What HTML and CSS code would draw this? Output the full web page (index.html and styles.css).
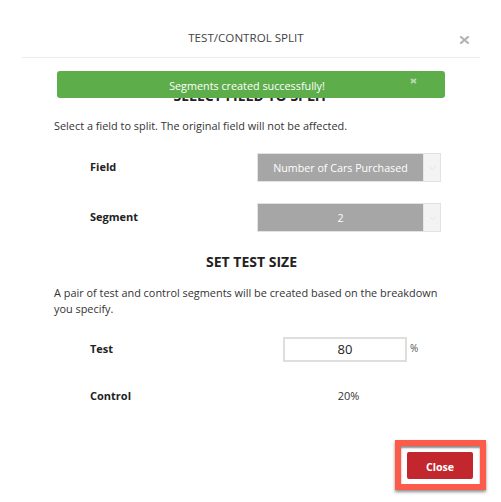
FILE: index.html
```html
<!DOCTYPE html>
<html>
<head>
<meta charset="utf-8">
<link rel="stylesheet" href="styles.css">
</head>
<body>
<div class="modal">
  <div class="header">
    <div class="title">TEST/CONTROL SPLIT</div>
    <svg class="x-icon" width="9" height="8" viewBox="0 0 9 8"><path d="M1 1 L8 7 M8 1 L1 7" stroke="#b3b3b3" stroke-width="2.2" stroke-linecap="square"/></svg>
  </div>

  <div class="alert">
    <span>Segments created successfully!</span>
    <svg class="alert-x" width="7" height="6" viewBox="0 0 7 6"><path d="M1 1 L6 5 M6 1 L1 5" stroke="#b5dbaa" stroke-width="1.8"/></svg>
  </div>

  <div class="body">
    <h2 class="heading first">SELECT FIELD TO SPLIT</h2>
    <p class="desc">Select a field to split. The original field will not be affected.</p>

    <div class="row row-field">
      <div class="label">Field</div>
      <div class="select">
        <div class="select-val">Number of Cars Purchased</div>
        <div class="select-arrow"><svg width="7" height="4" viewBox="0 0 7 4"><path d="M0.5 0.5 L3.5 3.5 L6.5 0.5" fill="none" stroke="#e4e4e4" stroke-width="1"/></svg></div>
      </div>
    </div>

    <div class="row row-seg">
      <div class="label">Segment</div>
      <div class="select">
        <div class="select-val">2</div>
        <div class="select-arrow"><svg width="7" height="4" viewBox="0 0 7 4"><path d="M0.5 0.5 L3.5 3.5 L6.5 0.5" fill="none" stroke="#e4e4e4" stroke-width="1"/></svg></div>
      </div>
    </div>

    <h2 class="heading second">SET TEST SIZE</h2>
    <p class="desc desc2">A pair of test and control segments will be created based on the breakdown you specify.</p>

    <div class="row row-test">
      <div class="label">Test</div>
      <div class="input">80</div>
      <div class="pct">%</div>
    </div>

    <div class="row row-control">
      <div class="label">Control</div>
      <div class="value">20%</div>
    </div>
  </div>

  <div class="footer">
    <div class="highlight">
      <button class="close-btn">Close</button>
    </div>
  </div>
</div>
</body>
</html>
```

FILE: styles.css
```css
* { box-sizing: border-box; }
html, body { margin: 0; padding: 0; background: #fff; }
body { font-family: "Open Sans", "Liberation Sans", sans-serif; color: #333; }

.modal { width: 501px; height: 502px; position: relative; }

.header {
  margin: 0 21px 0 22px;
  height: 58px;
  padding-top: 29px;
  border-bottom: 1px solid #ececec;
  position: relative;
  text-align: center;
}
.title { font-size: 11.6px; line-height: 18px; color: #444; padding-right: 10px; }
.x-icon { position: absolute; right: 11px; top: 36px; }

.alert {
  position: absolute;
  left: 57px; top: 71px;
  width: 388px; height: 27px;
  background: #5dae4b;
  border-radius: 3px;
  color: #fff;
  font-size: 10.8px;
  line-height: 27px;
  text-align: center;
  z-index: 2;
}
.alert span { position: relative; left: -4px; top: 1px; }
.alert-x { position: absolute; left: 353px; top: 7px; }

.body { padding: 0 0 0 54px; }

.heading {
  margin: 0; font-size: 14px; font-weight: 700; line-height: 20px;
  text-align: center; color: #222; padding-right: 54px;
}
.heading.first { margin-top: 28px; }
.heading.second { margin-top: 20px; padding-left: 2px; }

.desc { margin: 12px 0 0; font-size: 10.9px; line-height: 16px; color: #333; width: 390px; }
.desc2 { margin-top: 13px; }

.row { display: flex; align-items: center; }
.label { width: 203px; padding-left: 36px; padding-bottom: 3px; font-size: 11px; font-weight: 700; color: #222; }
.row-field { margin-top: 19px; height: 29px; }
.row-seg { margin-top: 21px; height: 29px; }
.row-test { margin-top: 20px; height: 25px; }
.row-control { margin-top: 22px; height: 25px; }
.row-test .label, .row-control .label { width: 229px; }

.select {
  width: 184px; height: 29px;
  display: flex;
  border: 1px solid #e2e2e2;
  background: #a6a6a6;
}
.select-val { flex: 1; color: #fff; font-size: 10.7px; line-height: 28px; text-align: center; }
.select-arrow {
  width: 17px; background: #f3f3f3; border-left: 1px solid #e6e6e6;
  display: flex; align-items: center; justify-content: center;
}

.input {
  width: 124px; height: 25px;
  border: 2px solid #dedede;
  font-size: 13px; line-height: 21px; text-align: center; color: #222;
}
.pct { margin-left: 3px; padding-bottom: 3px; font-size: 10px; color: #555; }
.value { width: 124px; text-align: center; padding-left: 7px; padding-bottom: 2px; font-size: 11px; color: #333; }

.footer { display: flex; justify-content: flex-end; padding-right: 15px; margin-top: 31px; }
.highlight {
  width: 91px; height: 50px;
  border: 6px solid #fc5a4b;
  background: #fff;
  padding: 6px 6px 5px 6px;
  box-shadow: 0 2px 3px rgba(0,0,0,0.45), inset 0 2px 2px rgba(0,0,0,0.45);
}
.close-btn {
  display: block; width: 66px; height: 27px;
  border: 0; border-radius: 2px;
  background: #c1272d; color: #fff;
  font-family: "Open Sans", "Liberation Sans", sans-serif;
  font-size: 10.6px; font-weight: 700; padding: 3px 0 0 0;
}
```
